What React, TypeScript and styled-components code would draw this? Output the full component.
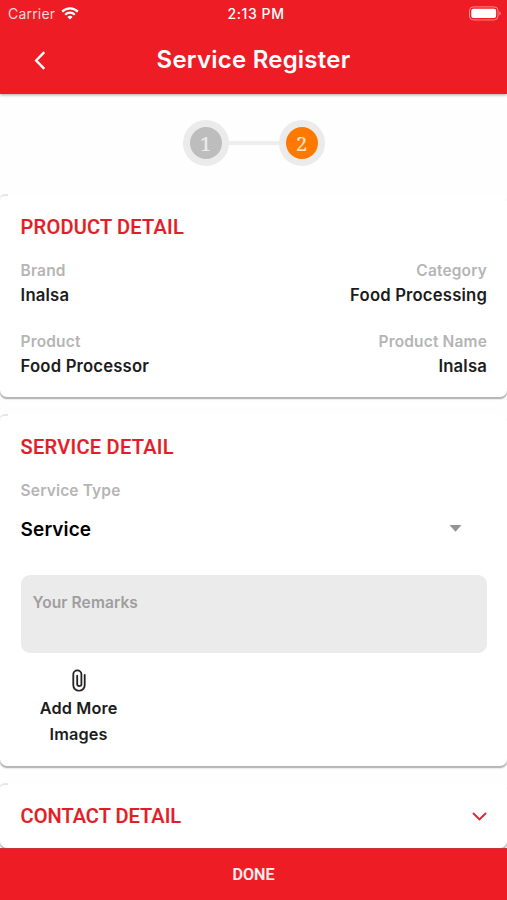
import React from "react";
import styled, { createGlobalStyle } from "styled-components";

const RED = "#ee1c25";

const GlobalStyle = createGlobalStyle`
  * { box-sizing: border-box; }
  body { margin: 0; background: #fff; font-family: Inter, "Liberation Sans", sans-serif; }
  h1, h2, p { margin: 0; }
  button { font: inherit; border: 0; padding: 0; background: none; }
`;

const Screen = styled.div`
  width: 507px;
  height: 900px;
  display: flex;
  flex-direction: column;
  overflow: hidden;
  background: #fefefe;
`;

const Top = styled.header`
  flex: none;
  height: 94px;
  background: ${RED};
  color: #fff;
  box-shadow: 0 1px 3px rgba(0, 0, 0, 0.35);
  z-index: 1;
`;

const StatusBar = styled.div`
  height: 27px;
  display: grid;
  grid-template-columns: 1fr auto 1fr;
  align-items: center;
  padding: 0 5px 0 8px;
  font-size: 14px;
  line-height: 27px;
`;

const Carrier = styled.div`
  display: flex;
  align-items: center;
  gap: 6px;
  color: #ffd9db;
  letter-spacing: 0.2px;
`;

const Clock = styled.div`
  font-weight: 500;
  font-size: 14px;
  letter-spacing: 0.6px;
  padding-left: 2px;
`;

const Battery = styled.svg`
  justify-self: end;
`;

const NavBar = styled.div`
  height: 66px;
  display: grid;
  grid-template-columns: 80px 1fr 80px;
  align-items: center;
`;

const BackButton = styled.button`
  display: flex;
  justify-content: center;
  color: #fff;
`;

const Title = styled.h1`
  text-align: center;
  font-size: 24px;
  font-weight: 600;
  line-height: 30px;
  letter-spacing: 0.22px;
`;

const Stepper = styled.div`
  flex: none;
  height: 100px;
  padding-bottom: 2px;
  display: flex;
  align-items: center;
  justify-content: center;
`;

const Step = styled.div<{ $active?: boolean }>`
  width: 46px;
  height: 46px;
  border-radius: 50%;
  border: 7px solid #ebebeb;
  background: ${(p) => (p.$active ? "#ff7800" : "#bdbdbd")};
  color: ${(p) => (p.$active ? "#ffe4cc" : "#ececec")};
  font: 20px/33px "Noto Serif", "DejaVu Serif", serif;
  -webkit-text-stroke: 0.2px currentColor;
  text-align: center;
`;

const StepLine = styled.div`
  width: 50px;
  height: 4px;
  background: #ededed;
`;

const Card = styled.section<{ $height: number }>`
  position: relative;
  flex: none;
  height: ${(p) => p.$height}px;
  margin-bottom: 17px;
  padding: 21px 20px 0 20.6px;
  border-radius: 7px;
  background: #fff;
  box-shadow: 0 2px 1px #b5b5b5, 0 2px 2px #d4d4d4;

  &::before {
    content: "";
    position: absolute;
    top: 0;
    left: -1px;
    width: 9px;
    height: 8px;
    border-top: 2px solid #e6e6e6;
    border-top-left-radius: 6px;
  }
`;

const Heading = styled.h2<{ $track: number }>`
  color: #e31d27;
  font-family: Roboto, sans-serif;
  font-size: 20px;
  font-weight: 500;
  line-height: 25px;
  letter-spacing: ${(p) => p.$track}px;
  -webkit-text-stroke: 0.2px currentColor;
`;

const Pair = styled.div<{ $gap: number }>`
  display: flex;
  justify-content: space-between;
  margin-top: ${(p) => p.$gap}px;
`;

const Field = styled.div<{ $right?: boolean }>`
  display: flex;
  flex-direction: column;
  align-items: ${(p) => (p.$right ? "flex-end" : "flex-start")};
`;

const Label = styled.p`
  color: #b5b5b5;
  font-size: 15.5px;
  font-weight: 600;
  line-height: 24px;
  letter-spacing: 0.15px;
`;

const Value = styled.p`
  color: #1c1c1c;
  font-size: 16.7px;
  font-weight: 600;
  line-height: 24px;
  letter-spacing: 0.17px;
`;

const ServiceType = styled.div`
  margin-top: 19px;
`;

const Select = styled.div`
  height: 52px;
  display: flex;
  align-items: center;
  justify-content: space-between;
  padding-right: 25px;
  color: #000;
  font-size: 19px;
  font-weight: 600;
  letter-spacing: 0.1px;

  svg { margin-bottom: 2px; }
`;

const Remarks = styled.div`
  height: 78px;
  margin-top: 20px;
  border-radius: 9px;
  padding: 16px 12px;
  background: #ebebeb;
  color: #9e9e9e;
  font-size: 15.5px;
  font-weight: 600;
  line-height: 24px;
  letter-spacing: 0.1px;
`;

const AddImages = styled.button`
  width: 116px;
  margin-top: 16px;
  display: flex;
  flex-direction: column;
  align-items: center;
  color: #1c1c1c;
  font-size: 16.3px;
  font-weight: 600;
  line-height: 26px;
  letter-spacing: 0.15px;

  svg { margin-bottom: 3px; }
`;

const ContactRow = styled.div`
  display: flex;
  align-items: center;
  justify-content: space-between;
`;

const Done = styled.button`
  flex: none;
  height: 52px;
  margin-top: -17px;
  border-top: 1px solid #c9343b;
  background: ${RED};
  color: #fff0f0;
  font-family: Roboto, sans-serif;
  font-size: 16px;
  font-weight: 500;
  -webkit-text-stroke: 0.2px currentColor;
  z-index: 1;
`;

export default function App() {
  return (
    <>
      <GlobalStyle />
      <Screen>
        <Top>
          <StatusBar>
            <Carrier>
              Carrier
              <svg width="18" height="13" viewBox="0 0 18 13" fill="none" stroke="#fff" strokeWidth="2.2">
                <path d="M1.2 4.6a11 11 0 0 1 15.6 0" />
                <path d="M4.2 7.7a6.8 6.8 0 0 1 9.6 0" />
                <path d="M9 12.6 6.4 10a3.7 3.7 0 0 1 5.2 0Z" fill="#fff" stroke="none" />
              </svg>
            </Carrier>
            <Clock>2:13 PM</Clock>
            <Battery width="34" height="15" viewBox="0 0 34 15">
              <rect x="1.5" y="0.9" width="28.5" height="13" rx="3.8" fill="none" stroke="#f78c91" strokeWidth="1" />
              <rect x="3.3" y="2.8" width="24.8" height="9.2" rx="2" fill="#fff" />
              <path d="M31.4 5.2c1.8.7 1.8 3.7 0 4.4Z" fill="#f78c91" />
            </Battery>
          </StatusBar>
          <NavBar>
            <BackButton aria-label="Back">
              <svg width="12" height="19" viewBox="0 0 12 19" fill="none" stroke="currentColor" strokeWidth="2.4">
                <path d="M10.3 1.2 2.2 9.5l8.1 8.3" />
              </svg>
            </BackButton>
            <Title>Service Register</Title>
          </NavBar>
        </Top>
        <Stepper>
          <Step>1</Step>
          <StepLine />
          <Step $active>2</Step>
        </Stepper>
        <Card $height={203}>
          <Heading $track={0.22}>PRODUCT DETAIL</Heading>
          <Pair $gap={19}>
            <Field>
              <Label>Brand</Label>
              <Value>Inalsa</Value>
            </Field>
            <Field $right>
              <Label>Category</Label>
              <Value>Food Processing</Value>
            </Field>
          </Pair>
          <Pair $gap={23}>
            <Field>
              <Label>Product</Label>
              <Value>Food Processor</Value>
            </Field>
            <Field $right>
              <Label>Product Name</Label>
              <Value>Inalsa</Value>
            </Field>
          </Pair>
        </Card>
        <Card $height={352}>
          <Heading $track={0.28}>SERVICE DETAIL</Heading>
          <ServiceType>
            <Label>Service Type</Label>
            <Select>
              Service
              <svg width="13" height="7" viewBox="0 0 13 7">
                <path d="M0.5 0h12l-6 6.7Z" fill="#949494" />
              </svg>
            </Select>
          </ServiceType>
          <Remarks>Your Remarks</Remarks>
          <AddImages>
            <svg width="14" height="23" viewBox="0 0 14 24" preserveAspectRatio="none" fill="none" stroke="#222" strokeWidth="1.8" strokeLinecap="round">
              <path d="M12.7 6v11a5.7 5.7 0 0 1-11.4 0V5.6a4 4 0 0 1 8.1 0v10.9a2.3 2.3 0 0 1-4.2 0V7" />
            </svg>
            <span>Add More</span>
            <span>Images</span>
          </AddImages>
        </Card>
        <Card $height={65}>
          <ContactRow>
            <Heading $track={0.03}>CONTACT DETAIL</Heading>
            <svg width="15" height="9" viewBox="0 0 15 9" fill="none" stroke="#dc2934" strokeWidth="2">
              <path d="m1 1 6.5 6.4L14 1" />
            </svg>
          </ContactRow>
        </Card>
        <Done>DONE</Done>
      </Screen>
    </>
  );
}
